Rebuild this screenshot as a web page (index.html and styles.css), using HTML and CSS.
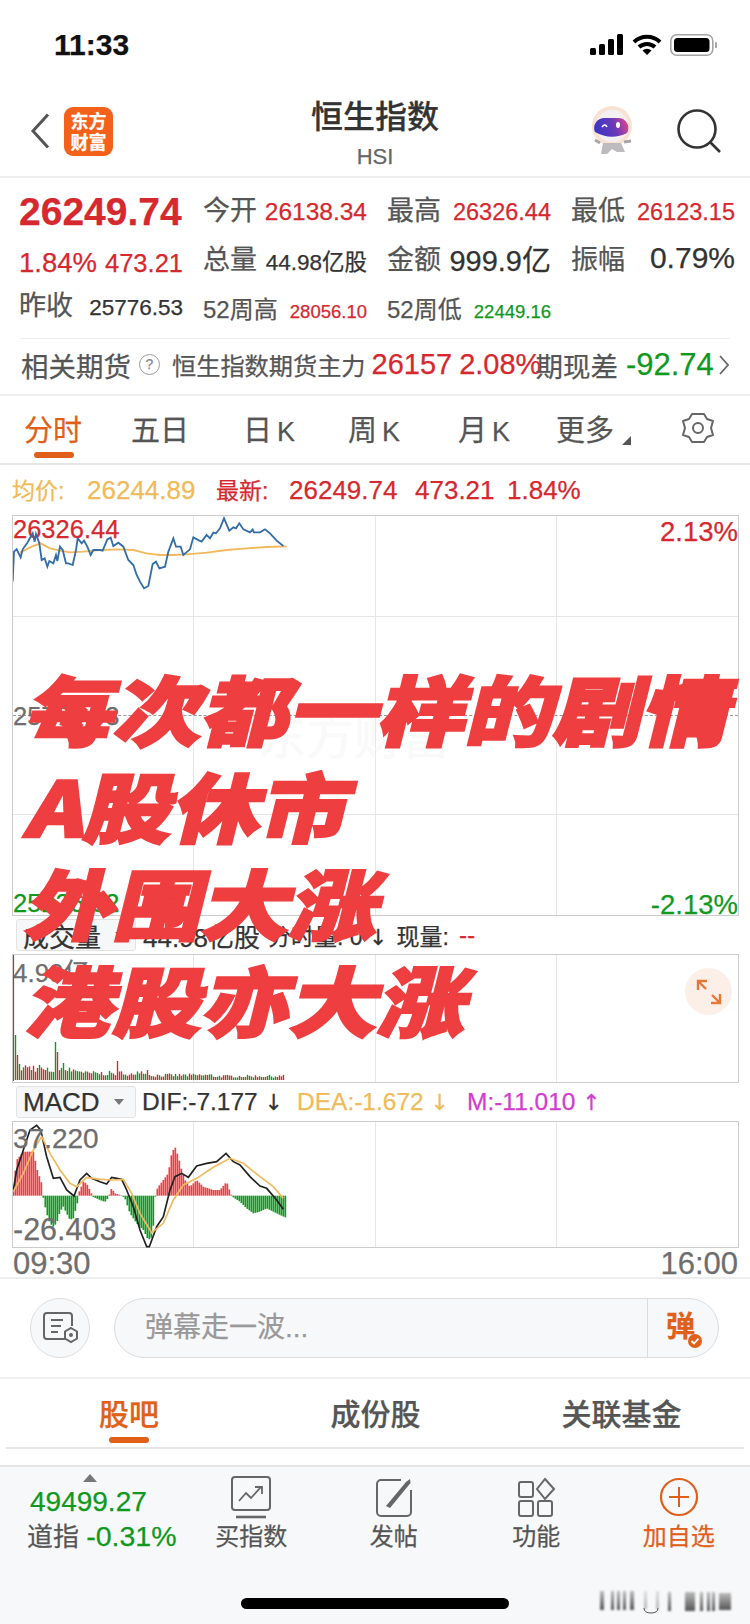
FILE: index.html
```html
<!DOCTYPE html>
<html lang="zh-CN">
<head>
<meta charset="utf-8">
<title>恒生指数</title>
<link rel="stylesheet" href="styles.css">
</head>
<body>
<main class="phone">
  <div class="status">
    <span class="clock">11:33</span>
    <div class="status-icons">
      <svg class="sig" width="34" height="21" viewBox="0 0 34 21"><rect x="0" y="14" width="6" height="7" rx="1.5"/><rect x="9" y="10" width="6" height="11" rx="1.5"/><rect x="18" y="5" width="6" height="16" rx="1.5"/><rect x="27" y="0" width="6" height="21" rx="1.5"/></svg>
      <svg class="wifi" width="30" height="22" viewBox="0 0 30 22"><path d="M2 8 A19 19 0 0 1 28 8" fill="none" stroke="#000" stroke-width="4"/><path d="M7 13 A12 12 0 0 1 23 13" fill="none" stroke="#000" stroke-width="4"/><path d="M15 21 L10.500 16.500 A6.500 6.500 0 0 1 19.500 16.500 Z" fill="#000"/></svg>
      <svg class="batt" width="47" height="22" viewBox="0 0 47 22"><rect x="0.800" y="0.800" width="42" height="20.400" rx="6" fill="none" stroke="#a5a5a5" stroke-width="1.600"/><rect x="4" y="4" width="35.500" height="14" rx="3.500" fill="#000"/><path d="M45 8 a3 3 0 0 1 0 6 z" fill="#a5a5a5"/></svg>
    </div>
  </div>

  <header class="nav">
    <svg class="back" width="20" height="36" viewBox="0 0 20 36"><path d="M18 1.500 L3 18 L18 34.500" fill="none" stroke="#555" stroke-width="3"/></svg>
    <div class="logo"><span>东方</span><span>财富</span></div>
    <div class="title"><h1>恒生指数</h1><p>HSI</p></div>
    <svg class="robot" width="50" height="50" viewBox="0 0 50 50">
      <defs><linearGradient id="visor" x1="0" x2="1" y1="0.600" y2="0.400"><stop offset="0" stop-color="#3a35c4"/><stop offset="0.600" stop-color="#6a3ab8"/><stop offset="1" stop-color="#d8458c"/></linearGradient></defs>
      <circle cx="25" cy="20" r="20" fill="#f8e2d4"/>
      <circle cx="25" cy="20" r="16" fill="#f3f0f2"/>
      <path d="M8 26 a10 10 0 0 1 10 -14 h14 a10 10 0 0 1 8 15 q-16 8 -32 -1 z" fill="url(#visor)"/>
      <path d="M15 21 q3 -4 5 0" fill="none" stroke="#fff" stroke-width="1.600"/>
      <ellipse cx="31" cy="19" rx="2" ry="3" fill="#fff"/>
      <path d="M16 37 h18 l4 9 h-8 l-5 -3 l-5 5 h-6 z" fill="#bdbbbe"/>
      <path d="M13 37 l-5 -3 M37 36 l7 -1" stroke="#a8a6a9" stroke-width="3"/>
    </svg>
    <svg class="search" width="44" height="44" viewBox="0 0 44 44"><circle cx="20" cy="20" r="18.500" fill="none" stroke="#333" stroke-width="2.600"/><path d="M33 33 L43 43" stroke="#333" stroke-width="2.600"/></svg>
  </header>

  <section class="quote">
    <div class="cell"><b class="big red lo3">26249.74</b></div>
    <div class="cell"><span class="lab hi5">今开</span><span class="v24 red lo3">26138.34</span></div>
    <div class="cell"><span class="lab hi5">最高</span><span class="v23 red lo3">26326.44</span></div>
    <div class="cell"><span class="lab hi5">最低</span><span class="v23 red lo3">26123.15</span></div>

    <div class="cell"><span class="v27 red lo11">1.84%</span><span class="v26 red lo11">473.21</span></div>
    <div class="cell"><span class="lab">总量</span><span class="v22 ink lo5">44.98亿股</span></div>
    <div class="cell"><span class="lab">金额</span><span class="v29 ink">999.9亿</span></div>
    <div class="cell"><span class="lab">振幅</span><span class="v30 ink">0.79%</span></div>

    <div class="cell"><span class="lab hi3">昨收</span><span class="v22 ink lo7">25776.53</span></div>
    <div class="cell"><span class="lab24 lo5">52周高</span><span class="v18 red lo15">28056.10</span></div>
    <div class="cell"><span class="lab24 lo5">52周低</span><span class="v18 green lo15">22449.16</span></div>
    <div class="cell"></div>
  </section>

  <div class="futures">
    <span class="f-lab">相关期货</span>
    <span class="help">?</span>
    <span class="f-name">恒生指数期货主力</span>
    <span class="f-num red">26157</span>
    <span class="f-pct red">2.08%</span>
    <span class="f-basis">期现差</span>
    <span class="f-val green">-92.74</span>
    <svg class="f-chev" width="12" height="20" viewBox="0 0 12 20"><path d="M2 1 L10 10 L2 19" fill="none" stroke="#666" stroke-width="1.800"/></svg>
  </div>

  <nav class="ktabs">
    <span class="ktab on">分时</span>
    <span class="ktab">五日</span>
    <span class="ktab">日<i>K</i></span>
    <span class="ktab">周<i>K</i></span>
    <span class="ktab">月<i>K</i></span>
    <span class="ktab more">更多</span>
    <svg class="gear" width="34" height="32" viewBox="0 0 34 32"><path d="M11 2 h12 l3 5 l6 2 v0 l-2 7 l2 7 l-6 2 l-3 5 h-12 l-3 -5 l-6 -2 l2 -7 l-2 -7 l6 -2 z" fill="none" stroke="#666" stroke-width="2" stroke-linejoin="round"/><circle cx="17" cy="16" r="5" fill="none" stroke="#666" stroke-width="2"/></svg>
  </nav>

  <div class="pricebar">
    <span class="amber w75">均价:</span><span class="amber w129 num">26244.89</span>
    <span class="red w73">最新:</span><span class="red w126 num">26249.74</span>
    <span class="red w92 num">473.21</span><span class="red num">1.84%</span>
  </div>

  <section class="chart chart-main">
    <div class="ghost">东方财富</div>
    <div class="midline"></div>
    <span class="cl tl red">26326.44</span>
    <span class="cl tr red">2.13%</span>
    <span class="cl ml grey">25776.53</span>
    <span class="cl bl green">25226.62</span>
    <span class="cl br green">-2.13%</span>
    <svg class="plot" width="300" height="100" viewBox="39 48 900 300">
      <polyline fill="none" stroke="#f2b95c" stroke-width="5.500" points="60,158 95,140 122,130 150,145 180,152 210,157 250,155 300,150 350,148 400,150 440,160 480,165 520,165 560,163 620,158 680,150 740,145 800,141 860,139"/>
      <polyline fill="none" stroke="#336ea6" stroke-width="5.500" points="38,245 42,155 50,148 62,172 68,148 82,128 98,100 104,125 108,102 118,130 125,180 134,175 142,200 148,183 160,190 168,165 172,183 180,140 188,150 198,190 205,190 210,192 218,195 228,150 233,115 245,130 252,122 262,140 272,165 280,150 300,150 308,152 322,118 332,113 340,138 355,128 370,140 385,180 400,195 410,225 420,245 432,265 445,258 458,192 468,185 478,205 495,200 505,155 520,115 528,140 542,140 550,165 570,148 580,112 598,122 605,125 620,105 630,115 640,98 648,100 660,85 672,55 688,92 700,82 708,85 718,70 730,88 750,97 758,88 762,97 780,97 795,88 810,100 830,122 850,138"/>
    </svg>
  </section>

  <div class="indic">
    <span class="pick"><span>成交量</span><i class="caret"></i></span>
    <span class="ink ind-a">44.98亿股</span>
    <span class="ink ind-b">分时量: 0 <span class="arr">↓</span></span>
    <span class="ink ind-c">现量:</span>
    <span class="red ind-d">--</span>
  </div>

  <section class="chart chart-vol">
    <span class="cl tl grey">4.99亿</span>
    <svg class="plot" id="volPlot" width="290" height="126" viewBox="0 0 290 126"></svg>
    <span class="expand"><svg width="26" height="26" viewBox="0 0 26 26"><path d="M2 11 V2 H11 M2 2 L10 10 M24 15 V24 H15 M24 24 L16 16" fill="none" stroke="#e8773a" stroke-width="2.400"/></svg></span>
  </section>

  <div class="indic">
    <span class="pick"><span>MACD</span><i class="caret"></i></span>
    <span class="ink m-a">DIF:-7.177 <span class="arr">↓</span></span>
    <span class="amber m-b">DEA:-1.672 <span class="arr">↓</span></span>
    <span class="magenta">M:-11.010 <span class="arr">↑</span></span>
  </div>

  <section class="chart chart-macd">
    <svg class="plot" id="macdPlot" width="300" height="127" viewBox="39 126 900 381">
      <g id="macdBars"></g>
      <polyline fill="none" stroke="#222" stroke-width="5" points="40,330 50,270 70,210 90,150 110,136 122,150 140,230 160,295 180,292 200,330 222,348 240,300 260,280 275,295 300,305 320,312 335,292 365,298 380,330 400,380 420,450 440,500 448,500 470,440 490,410 510,330 525,290 545,280 565,292 590,258 620,250 650,245 678,220 700,245 720,255 750,290 780,318 800,325 830,360 850,388"/>
      <polyline fill="none" stroke="#f2b95c" stroke-width="5" points="40,335 70,280 100,210 125,170 150,220 180,270 210,310 230,320 260,292 300,298 340,300 370,298 395,340 420,400 455,458 490,430 520,360 550,315 590,295 640,262 690,235 730,250 780,290 820,320 850,355"/>
    </svg>
    <span class="cl m-top grey">37.220</span>
    <span class="cl m-bot grey">-26.403</span>
  </section>

  <div class="axis"><span>09:30</span><span>16:00</span></div>

  <div class="comment">
    <span class="round">
      <svg width="36" height="32" viewBox="0 0 36 32"><path d="M24 27 H5 a3 3 0 0 1 -3 -3 V4 a3 3 0 0 1 3 -3 H27 a3 3 0 0 1 3 3 V14" fill="none" stroke="#666" stroke-width="2"/><path d="M9 8 H21 M9 14 H19 M9 20 H16" stroke="#666" stroke-width="2"/><path d="M29 16 l6 3.500 v7 l-6 3.500 l-6 -3.500 v-7 z" fill="none" stroke="#666" stroke-width="2"/><circle cx="29" cy="23" r="2" fill="#666"/></svg>
    </span>
    <div class="input">
      <span class="ph">弹幕走一波...</span>
      <span class="send">弹<svg class="tick" width="14" height="14" viewBox="0 0 14 14"><circle cx="7" cy="7" r="7" fill="#e0601a"/><path d="M3.500 7 L6 9.500 L10.500 4.500" fill="none" stroke="#fff" stroke-width="1.800"/></svg></span>
    </div>
  </div>

  <nav class="subtabs">
    <span class="sub on">股吧</span>
    <span class="sub">成份股</span>
    <span class="sub">关联基金</span>
  </nav>

  <footer class="foot">
    <div class="idx">
      <i class="up"></i>
      <span class="idx-v green">49499.27</span>
      <span class="idx-n"><span>道指</span> <span class="green idx-p">-0.31%</span></span>
    </div>
    <div class="act">
      <svg width="42" height="44" viewBox="0 0 42 44"><rect x="2" y="1" width="38" height="33" rx="3" fill="none" stroke="#666" stroke-width="2"/><path d="M9 25 L16 17 L21 22 L31 11 M25 11 H32 V18" fill="none" stroke="#666" stroke-width="1.800"/><path d="M6 41 H36" stroke="#666" stroke-width="2.600"/></svg>
      <span>买指数</span>
    </div>
    <div class="act">
      <svg width="42" height="44" viewBox="0 0 42 44"><path d="M28 4 H8 a4 4 0 0 0 -4 4 V36 a4 4 0 0 0 4 4 H34 a4 4 0 0 0 4 -4 V14" fill="none" stroke="#666" stroke-width="2"/><path d="M13 30 L33 6 L37 3 L37.500 7 L17 32 Z" fill="#666"/></svg>
      <span>发帖</span>
    </div>
    <div class="act">
      <svg width="42" height="44" viewBox="0 0 42 44"><rect x="4" y="6" width="14" height="15" rx="2" fill="none" stroke="#666" stroke-width="2"/><rect x="4" y="25" width="14" height="15" rx="2" fill="none" stroke="#666" stroke-width="2"/><rect x="23" y="25" width="14" height="15" rx="2" fill="none" stroke="#666" stroke-width="2"/><path d="M30 3 L39 13 L30 23 L22 13 Z" fill="none" stroke="#666" stroke-width="2"/></svg>
      <span>功能</span>
    </div>
    <div class="act act-add">
      <svg width="42" height="44" viewBox="0 0 42 44"><circle cx="21" cy="21" r="18" fill="none" stroke="#e0601a" stroke-width="2.200"/><path d="M21 11 V31 M11 21 H31" stroke="#e0601a" stroke-width="2"/></svg>
      <span>加自选</span>
    </div>
    <div class="homebar"></div>
    <svg class="mark" width="140" height="26" viewBox="0 0 140 26">
      <defs><filter id="smear"><feGaussianBlur stdDeviation="1"/></filter><linearGradient id="fade" x1="0" x2="0" y1="0" y2="1"><stop offset="0" stop-color="#bbb"/><stop offset="1" stop-color="#555"/></linearGradient></defs>
      <g filter="url(#smear)" fill="url(#fade)">
        <rect x="3" y="3" width="4" height="19"/><rect x="14" y="3" width="3" height="19"/><rect x="20" y="3" width="3" height="19"/><rect x="26" y="3" width="3" height="19"/><rect x="33" y="3" width="4" height="19"/>
        <rect x="47" y="3" width="3" height="18" opacity="0.400"/><rect x="59" y="3" width="3" height="18" opacity="0.400"/>
        <rect x="71" y="4" width="3" height="19"/><rect x="88" y="4" width="10" height="19"/><rect x="103" y="4" width="3" height="19"/><rect x="110" y="4" width="3" height="19"/><rect x="115" y="4" width="3" height="19"/><rect x="122" y="5" width="12" height="17"/>
      </g>
      <path d="M47 20 q0 5 7 5 q7 0 7 -5" fill="none" stroke="#555" stroke-width="1"/>
    </svg>
  </footer>

  <div class="headline">
    <p>每次都一样的剧情</p>
    <p>A股休市</p>
    <p>外围大涨</p>
    <p>港股亦大涨</p>
  </div>
</main>
<script src="chart.js"></script>
</body>
</html>
```

FILE: styles.css
```css
* { box-sizing: border-box; }
html, body { margin: 0; padding: 0; background: #fff; }
body { font-family: "Liberation Sans", "Noto Sans CJK SC", sans-serif; color: #333; -webkit-text-stroke: 0.25px; }
h1, p { margin: 0; font-weight: normal; }
i { font-style: normal; }

.phone { position: relative; width: 750px; height: 1624px; overflow: hidden; }
.red { color: #d6282f; }
.green { color: #11991f; }
.amber { color: #efbb59; }
.magenta { color: #d33ccf; }
.ink { color: #333; }
.grey { color: #6e6e6e; }

.status { height: 86px; display: flex; justify-content: space-between; align-items: center; padding: 3px 33px 0 54px; }
.clock { font-size: 30px; font-weight: 700; color: #111; }
.status-icons { display: flex; align-items: center; gap: 8px; }
.sig { fill: #000; }

.nav { position: relative; height: 92px; border-bottom: 2px solid #eee; display: flex; align-items: center; padding: 0 30px; }
.back { flex: none; }
.logo { flex: none; margin-left: 14px; width: 49px; height: 49px; border-radius: 9px; background: #f4611a; color: #fff; display: flex; flex-direction: column; align-items: center; justify-content: center; font-size: 18px; line-height: 21px; font-weight: 700; font-family: "Noto Sans CJK SC", sans-serif; }
.title { position: absolute; left: 0; right: 0; top: 6px; text-align: center; }
.title h1 { font-size: 32px; line-height: 44px; font-weight: 500; color: #333; font-family: "Noto Sans CJK SC", sans-serif; }
.title p { margin-top: 6px; font-size: 22px; line-height: 30px; color: #666; }
.robot { margin-left: auto; }
.search { margin-left: 40px; margin-right: -1px; }

.quote { display: grid; grid-template-columns: repeat(4, 164px); column-gap: 20px; grid-auto-rows: 47px; padding: 9px 0 0 19px; height: 160px; }
.cell { display: flex; justify-content: space-between; align-items: center; white-space: nowrap; }
.hi5 { margin-bottom: 5px; }
.hi3 { margin-bottom: 3px; }
.lo3 { margin-top: 3px; }
.lo5 { margin-top: 5px; }
.lo7 { margin-top: 7px; }
.lo11 { margin-top: 11px; }
.lo15 { margin-top: 15px; }
.big { font-size: 39px; line-height: 44px; }
.lab { font-size: 27px; color: #555; }
.lab24 { font-size: 24px; color: #555; }
.v24 { font-size: 24.500px; }
.v23 { font-size: 23.500px; }
.v26 { font-size: 25.500px; }
.v27 { font-size: 27.500px; }
.v22 { font-size: 22.500px; }
.v29 { font-size: 29px; }
.v30 { font-size: 30px; }
.v18 { font-size: 18.500px; }

.futures { margin: 0 20px; height: 56px; border-top: 1px solid #eee; display: flex; align-items: center; white-space: nowrap; padding-bottom: 4px; }
.f-lab { margin-left: 1px; font-size: 27.500px; color: #555; }
.help { margin-left: 8px; width: 21px; height: 21px; border: 1px solid #999; border-radius: 50%; font-size: 14px; line-height: 19px; text-align: center; color: #888; }
.f-name { margin-left: 12px; font-size: 24.200px; color: #555; }
.f-num { margin-left: 6px; font-size: 29px; font-weight: 500; }
.f-pct { margin-left: 7px; font-size: 29px; }
.f-basis { margin-left: -6px; font-size: 27.500px; color: #555; }
.f-val { margin-left: 8px; font-size: 31px; }
.f-chev { margin-left: 4px; }

.ktabs { height: 71px; display: grid; grid-template-columns: 107px 112px 105px 110px 98px 125px 50px; align-items: center; padding: 0 0 3px 24px; border-top: 2px solid #eee; border-bottom: 2px solid #e5e5e5; }
.ktab { position: relative; font-size: 29px; color: #555; white-space: nowrap; }
.ktab i { margin-left: 5px; font-size: 27px; }
.ktab.on { color: #e0601a; }
.ktab.on::after { content: ""; position: absolute; left: 10px; top: 45px; width: 40px; height: 6px; border-radius: 3px; background: #e0601a; }
.more::after { content: ""; position: absolute; left: 66px; top: 29px; border-left: 9px solid transparent; border-bottom: 9px solid #555; }

.pricebar { height: 50px; display: flex; align-items: baseline; padding: 7px 0 0 12px; font-size: 23px; white-space: nowrap; }
.num { font-size: 26px; }
.w75 { width: 75px; }
.w129 { width: 129px; }
.w73 { width: 73px; }
.w126 { width: 126px; }
.w92 { width: 92px; }

.chart { position: relative; margin-left: 12px; width: 727px; border: 1px solid #ccc; background-repeat: no-repeat; background-image: linear-gradient(#e6e6e6, #e6e6e6), linear-gradient(#e6e6e6, #e6e6e6), linear-gradient(#e6e6e6, #e6e6e6); background-size: 1px 100%; background-position: 180px 0, 362px 0, 543px 0; }
.chart-main { height: 401px; }
.chart-main::before, .chart-main::after { content: ""; position: absolute; left: 0; right: 0; height: 1px; background: #e6e6e6; }
.chart-main::before { top: 100px; }
.chart-main::after { top: 298px; }
.midline { position: absolute; left: 0; right: 0; top: 199px; border-top: 1px dashed #999; }
.ghost { position: absolute; left: 245px; top: 182px; font-size: 48px; color: #f9f9f9; font-family: "Noto Sans CJK SC", sans-serif; }
.plot { position: absolute; left: 0; top: 0; }
.cl { position: absolute; font-size: 25.500px; line-height: 28px; white-space: nowrap; }
.tl { left: 0; top: -1px; }
.tr { right: 0; top: 2px; font-size: 27.500px; }
.ml { left: 0; top: 186px; }
.bl { left: 0; top: 373px; }
.br { right: 0; top: 375px; font-size: 27.500px; }

.indic { height: 38px; display: flex; align-items: center; padding-left: 16px; font-size: 24.500px; white-space: nowrap; }
.arr { font-family: "DejaVu Sans", sans-serif; font-size: 22px; }
.pick { width: 120px; height: 32px; flex: none; display: flex; align-items: center; gap: 14px; padding: 0 6px; background: #f6f7f9; border: 1px solid #e2e2e2; border-radius: 3px; font-size: 26px; color: #333; }
.caret { border: 5px solid transparent; border-top: 6px solid #777; border-bottom: 0; }
.ind-a { margin-left: 7px; font-size: 26px; }
.ind-b { margin-left: 8px; font-size: 23px; }
.ind-c { margin-left: 9px; font-size: 23px; }
.ind-d { margin-left: 10px; }
.m-a { margin-left: 6px; width: 155px; }
.m-b { width: 170px; }

.chart-vol { height: 129px; }
.chart-vol .cl { top: 4px; font-size: 26px; }
.expand { position: absolute; left: 672px; top: 13px; width: 47px; height: 47px; border-radius: 50%; background: #fbefe8; display: flex; align-items: center; justify-content: center; }

.chart-macd { height: 127px; }
.m-top { left: 0; top: 3px; font-size: 28px; }
.m-bot { left: 0; top: 93px; font-size: 30.500px; }

.axis { height: 29px; display: flex; justify-content: space-between; margin: 0 12px 0 13px; font-size: 31px; line-height: 31px; color: #6e6e6e; }
.comment { height: 102px; display: flex; align-items: center; padding: 0 31px 0 30px; gap: 24px; border-top: 2px solid #eee; border-bottom: 2px solid #f0f0f0; }
.round { width: 60px; height: 60px; flex: none; border: 1px solid #ddd; border-radius: 50%; background: #f7f8fa; display: flex; align-items: center; justify-content: center; }
.input { flex: 1; height: 60px; border: 1px solid #dcdcdc; border-radius: 30px; background: #f7f8fa; display: flex; align-items: center; justify-content: space-between; padding-left: 30px; }
.ph { font-size: 28px; line-height: 34px; color: #999; }
.send { position: relative; width: 71px; height: 58px; border-left: 1px solid #dcdcdc; padding-left: 18px; font-size: 29px; line-height: 56px; font-weight: 700; color: #e0601a; }
.tick { position: absolute; left: 40px; top: 35px; }

.subtabs { margin: 0 6px; height: 70px; display: grid; grid-template-columns: 246px 247px 245px; align-items: center; border-bottom: 2px solid #e5e5e5; padding-bottom: 3px; }
.sub { position: relative; justify-self: center; font-size: 30px; color: #555; font-weight: 500; }
.sub.on { color: #e0601a; }
.sub.on::after { content: ""; position: absolute; left: 10px; top: 47px; width: 40px; height: 6px; border-radius: 3px; background: #e0601a; }

.foot { position: relative; margin-top: 16px; height: 160px; background: #f7f8fa; border-top: 2px solid #e5e5e5; display: grid; grid-template-columns: 180px repeat(4, 142.500px); align-content: start; }
.idx { position: relative; display: flex; flex-direction: column; align-items: flex-start; padding: 20px 0 0 27px; white-space: nowrap; }
.up { position: absolute; left: 83px; top: 7px; border: 7px solid transparent; border-bottom: 8px solid #777; border-top: 0; }
.idx-v { margin-left: 3px; font-size: 28px; line-height: 30px; }
.idx-n { margin-top: 2px; font-size: 26px; line-height: 34px; color: #555; }
.idx-p { font-size: 28.500px; }
.act { display: flex; flex-direction: column; align-items: center; padding-top: 9px; font-size: 24px; line-height: 34px; color: #555; }
.act-add { color: #e0601a; }
.homebar { position: absolute; left: 241px; top: 131px; width: 268px; height: 11px; border-radius: 6px; background: #000; }
.mark { position: absolute; left: 597px; top: 121px; }

.headline { position: absolute; left: 32px; top: 658px; color: #ee3e3f; font-family: "Noto Sans CJK SC", sans-serif; font-size: 88px; line-height: 97px; white-space: nowrap; -webkit-text-stroke: 3px #ee3e3f; }
.headline p { font-weight: 900; width: max-content; height: 97px; transform: skewX(-14deg) scaleY(0.860); transform-origin: 0 50%; }
```

FILE: chart.js
```js
(function () {
  var NS = "http://www.w3.org/2000/svg";

  function lerp(keys, x) {
    for (var i = 1; i < keys.length; i++) {
      if (x <= keys[i][0]) {
        var a = keys[i - 1], b = keys[i];
        return a[1] + (b[1] - a[1]) * (x - a[0]) / (b[0] - a[0]);
      }
    }
    return keys[keys.length - 1][1];
  }

  function line(parent, x, y1, y2, color, w) {
    var l = document.createElementNS(NS, "line");
    l.setAttribute("x1", x);
    l.setAttribute("x2", x);
    l.setAttribute("y1", y1);
    l.setAttribute("y2", y2);
    l.setAttribute("stroke", color);
    l.setAttribute("stroke-width", w);
    parent.appendChild(l);
  }

  var seed = 7;
  function rnd() {
    seed = (seed * 16807) % 2147483647;
    return seed / 2147483647;
  }

  /* volume bars */
  var vol = document.getElementById("volPlot");
  var spike = { 2: 45, 4: 25, 6: 16, 42: 38, 44: 28, 50: 17, 104: 19, 134: 10 };
  line(vol, 0.5, 0, 126, "#d6282f", 1.2);
  for (var vx = 2; vx < 272; vx += 2) {
    var base = vx < 30 ? 13 : vx < 70 ? 10 : vx < 130 ? 7 : vx < 200 ? 5 : 4;
    var h = spike[vx] || base * (0.6 + rnd() * 0.7);
    line(vol, vx + 0.5, 125 - h, 125, rnd() > 0.5 ? "#d6282f" : "#11991f", 1.4);
  }

  /* macd histogram, keyframes in 3x coordinates */
  var zero = 347;
  var bars = document.getElementById("macdBars");
  var keys = [[40,320],[50,240],[70,215],[100,215],[112,270],[125,310],[128,340],[131,360],[140,400],[150,430],[160,440],[170,430],[180,395],[190,380],[200,400],[210,420],[220,415],[232,370],[235,340],[240,330],[250,305],[260,310],[272,335],[278,350],[300,360],[315,366],[326,352],[330,335],[335,325],[345,340],[365,346],[375,355],[390,400],[410,430],[430,450],[445,480],[458,470],[465,355],[470,330],[475,320],[490,300],[505,280],[515,220],[525,200],[535,230],[545,270],[555,300],[570,320],[590,300],[610,320],[640,330],[660,330],[680,305],[692,340],[697,350],[720,365],[740,385],[760,400],[780,395],[800,385],[820,395],[840,405],[858,413]];
  for (var z = 40; z <= 858; z += 6) {
    var y = lerp(keys, z);
    line(bars, z, Math.min(y, zero), Math.max(y, zero), y < zero ? "#ee3e3f" : "#11991f", 5.2);
  }
})();
```
